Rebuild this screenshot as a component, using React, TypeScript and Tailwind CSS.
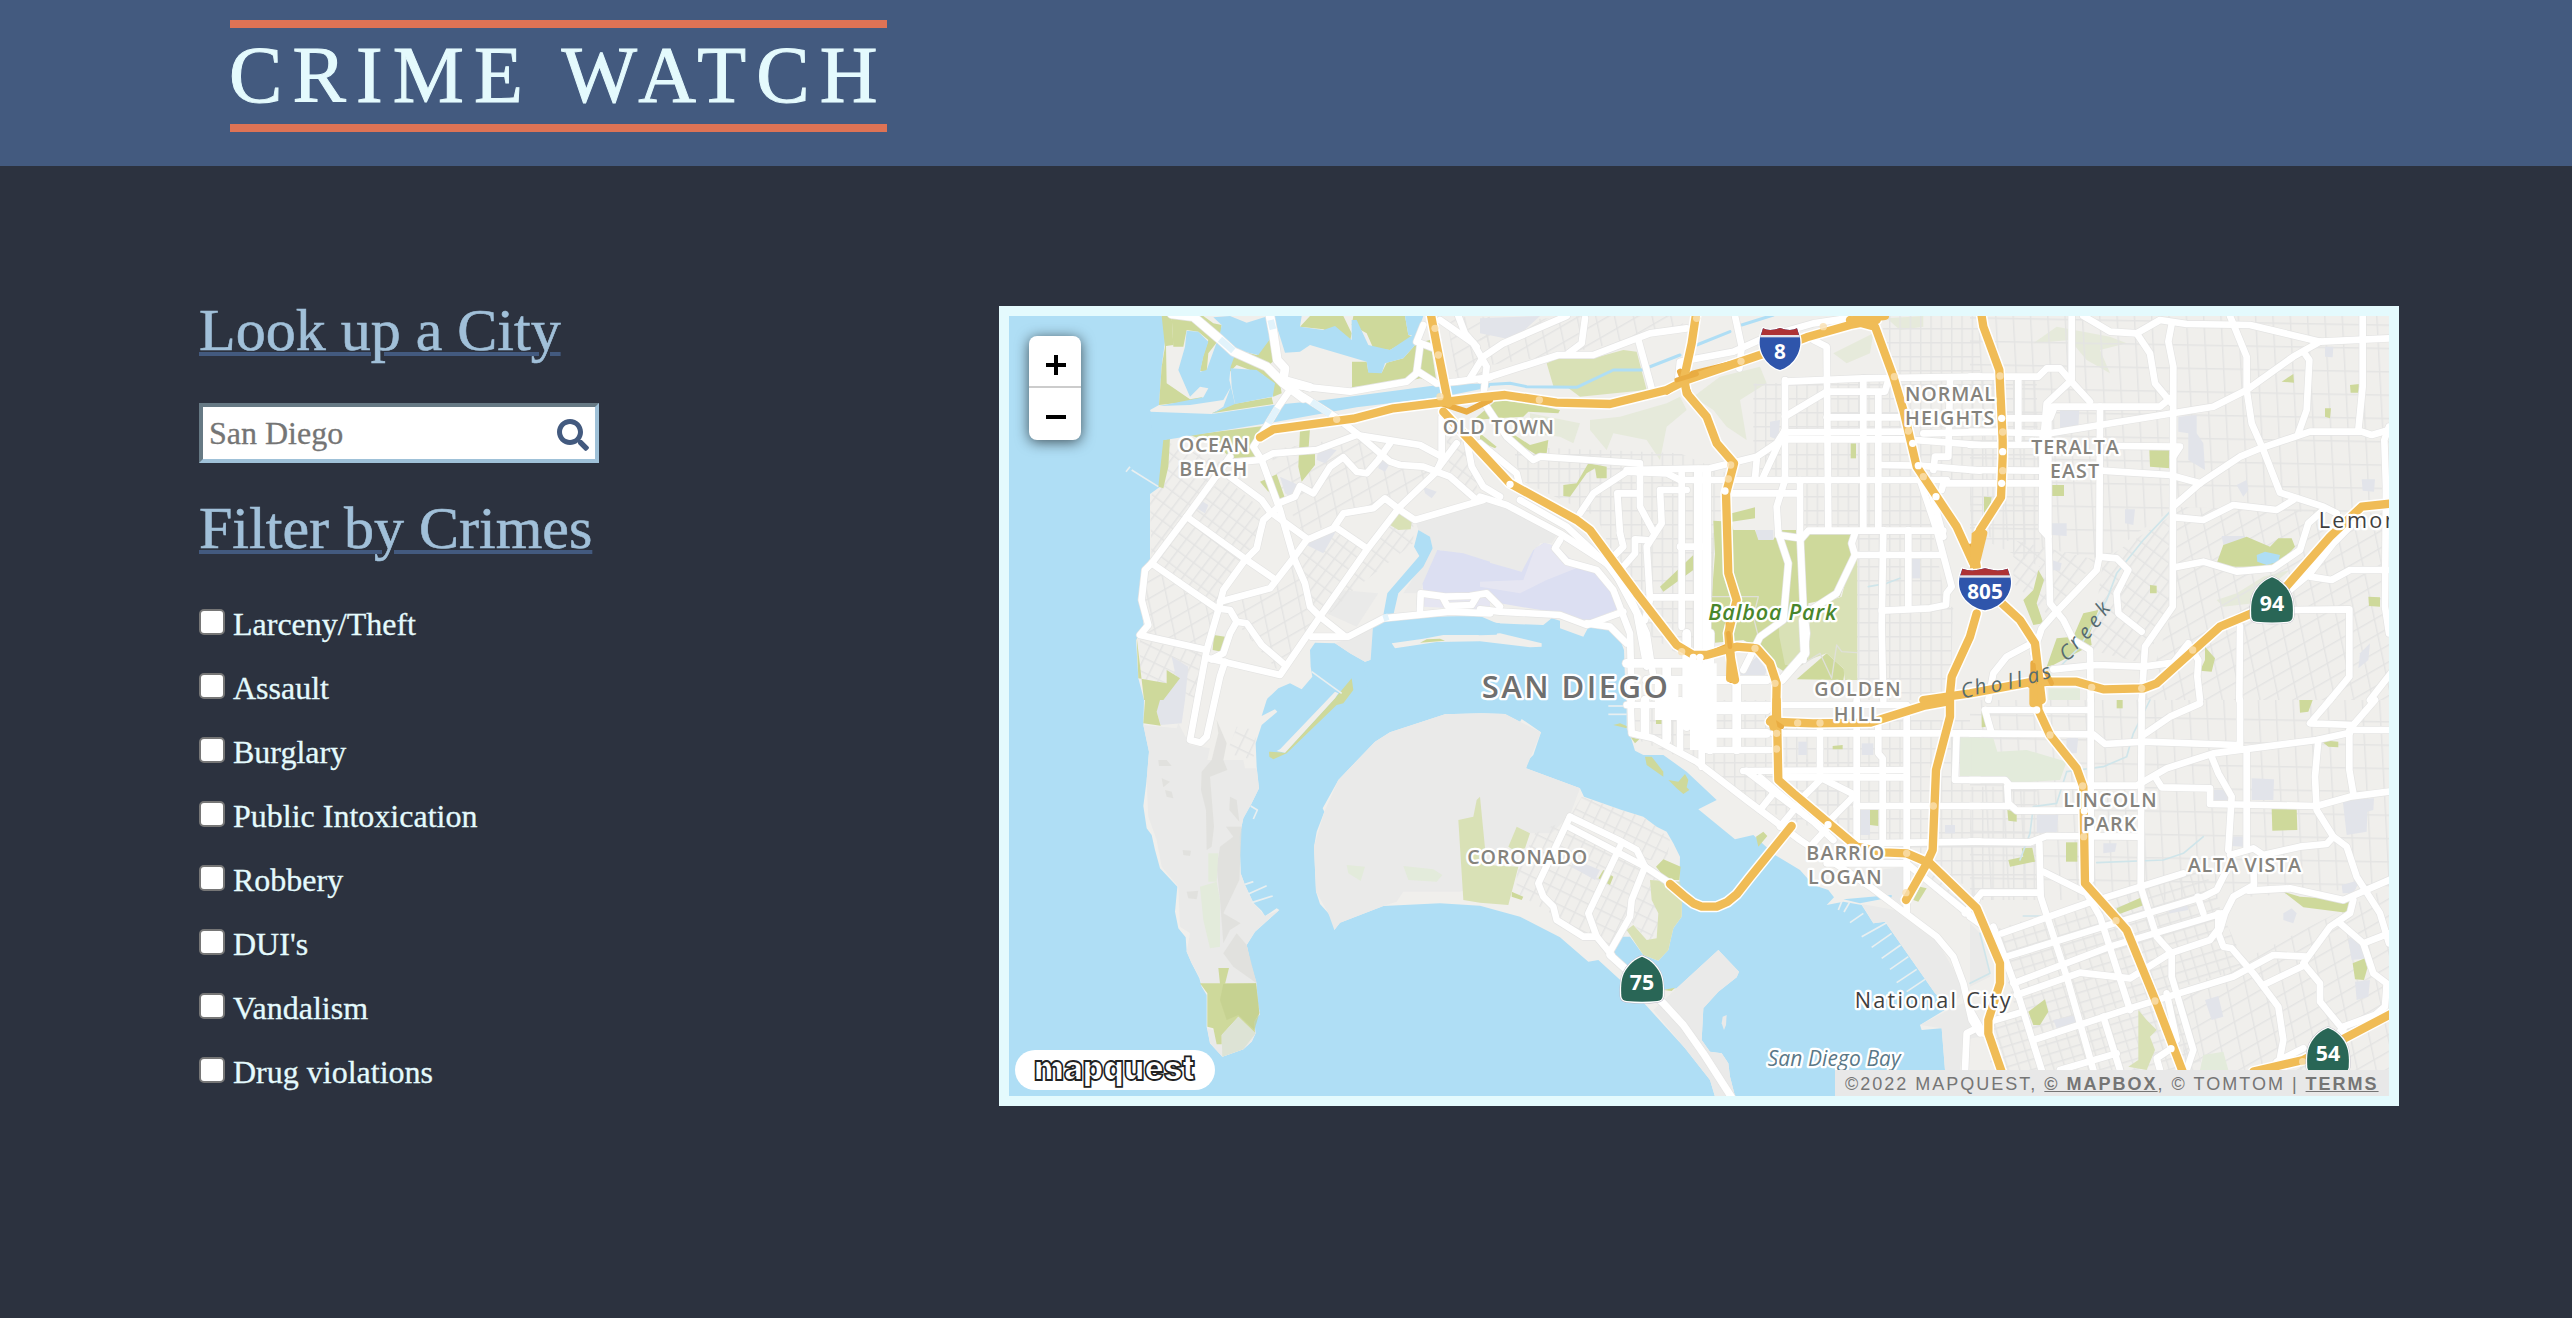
import React from "react";
import { FaSearch } from "react-icons/fa";

const crimes = [
  "Larceny/Theft",
  "Assault",
  "Burglary",
  "Public Intoxication",
  "Robbery",
  "DUI's",
  "Vandalism",
  "Drug violations",
];

// The map is drawn in six sectors; each has its own origin on the canvas.
type Sector = "A" | "B" | "C" | "D" | "E" | "F";
const origin: Record<Sector, [number, number]> = {
  A: [0, 0],
  B: [1470, 0],
  C: [2940, 0],
  D: [0, 1200],
  E: [1470, 1200],
  F: [2940, 1200],
};

// Shifts a list of "x,y" points from a sector to the canvas.
const at = (s: Sector, points: string) =>
  points
    .trim()
    .split(/\s+/)
    .map((p) => {
      const [x, y] = p.split(",").map(Number);
      return `${x + origin[s][0]},${y + origin[s][1]}`;
    })
    .join(" ");

const mainland = [
  at("A", "515,48 528,100 515,200 507,315 480,330 495,372 525,420 520,500 510,560 480,582 480,780 465,815 450,905 462,980 438,1020 445,1135"),
  at("D", "462,0 460,75 477,155 470,240 460,318 470,385 485,405 495,450 510,505 562,560 555,635 565,685 587,712 590,755 605,790 628,835 635,860 650,885 650,980 660,1030 697,1070 760,1048 785,1025 797,1000 793,965 810,942 803,905 800,855 782,790 770,735 795,695 868,630 860,625 825,648 815,632 790,608 765,555 752,520 748,410 760,355 785,310 807,265 800,200 797,130 815,75 862,35 855,28 815,48 830,0"),
  at("A", "833,1195 865,1165 900,1150 935,1168 967,1130 962,1100 960,1050 975,1028 1035,1030 1080,1060 1125,1085 1142,1080 1152,1010 1170,960 1300,950 1450,948"),
  at("B", "0,948 50,970 190,975 215,955 240,962 240,985 310,1010 325,982 385,985 415,1005 432,1050 437,1195"),
  at("E", "440,0 440,85 455,120 465,152 490,165 550,165 620,215 710,300 655,328 765,418 820,405 885,465 960,510 1000,555 1045,570 1062,592 1040,615 1090,605 1145,615 1180,670 1215,665 1365,880 1410,920 1320,975 1325,990 1385,985 1395,1110 1395,1200"),
  at("F", "1300,1200"),
  at("C", "1300,0"),
  at("A", "515,0"),
].join(" ");

const coronado = [
  at("D", "972,440 980,395 1003,335 998,325 1045,240 1155,125 1200,97 1365,43 1475,40"),
  at("E", "75,42 120,65 125,57 183,97 160,165 145,180 138,205 300,265 312,290 425,330 490,350 530,380 560,395 580,430 600,470 598,560 606,600 605,650 580,685 565,750 535,782 490,765 450,710 425,710 400,755 440,815 550,870 590,865 715,750 777,815 770,832 715,875 670,925 665,1020 690,1055 725,1060 745,1090 750,1130 768,1200 708,1200 690,1140 615,1045 470,885 355,780 325,785 240,712 120,650 0,617"),
  at("D", "1350,610 1180,618 1050,668 1033,690 1030,665 1015,640 990,612 978,575"),
].join(" ");

const water: string[] = [
  at("A", "590,92 625,95 655,125 640,170 630,215 650,210 690,100 695,75 670,52 720,48 770,68 835,48 845,110 805,165 740,150 722,200 718,240 735,312 665,342 700,320 722,262 700,300 600,315 507,318 640,292 655,265 630,260 600,290 565,210 585,140"),
  at("A", "850,48 935,48 930,80 1000,90 1035,78 1085,120 1085,60 1100,60 1135,135 1200,150 1260,110 1285,90 1280,130 1240,175 1185,190 1175,220 1135,218 1130,185 960,135 930,155 885,158 870,110"),
  at("A", "1245,48 1300,48 1280,105 1255,105"),
  at("A", "722,205 800,210 855,250 848,290 735,312 725,260"),
  at("A", "480,335 665,342 850,315 985,302 1345,255 1500,250 1500,262 1350,292 1100,322 860,365 525,420 490,420"),
  at("A", "1285,690 1320,710 1328,745 1300,800 1225,880 1210,945 1180,945 1192,880 1288,768 1272,740"),
  at("A", "1150,965 1450,948 1472,985 1465,1005 1360,1005 1205,1030 1215,1045 1340,1025 1470,1025 1470,1200 1140,1200 1120,1090 1142,1080"),
  at("C", "860,765 885,755 930,765 925,785 890,795 862,785"),
  at("E", "1090,598 1235,585 1235,592 1140,610"),
];

const waterways: string[] = [
  at("B", "0,255 90,250 140,260 290,262 400,210 485,210 600,165"),
  at("B", "650,135 750,95"),
  at("B", "785,75 880,45"),
];

const creeks: string[] = [
  at("C", "600,635 520,720 440,820 410,900 330,1040 260,1110"),
  at("F", "540,0 490,100 470,170 400,200 290,215 260,310 190,320 180,400 150,480"),
  at("F", "700,410 640,460 580,480 380,488"),
  at("F", "30,700 60,820 0,850"),
  at("F", "160,648 215,648"),
  at("B", "1165,860 1220,850 1260,835"),
];

const parks: string[] = [
  at("A", "515,48 545,48 550,135 528,138 530,250 600,298 635,292 640,300 507,315 515,200 525,140"),
  at("A", "545,48 640,48 670,70 695,75 690,115 655,160 650,215 630,212 640,165 655,120 625,95 590,90 580,140 550,140"),
  at("A", "740,150 800,165 845,110 855,180 830,200 870,250 875,280 850,290 820,225 740,195 715,220 718,190"),
  at("A", "930,80 960,48 1060,48 1085,100 1080,125 1000,88"),
  at("A", "1090,48 1245,48 1255,105 1270,110 1200,150 1150,145 1130,100 1085,75"),
  at("A", "1086,185 1130,185 1135,215 1175,218 1190,188 1240,175 1280,130 1320,120 1340,250 1290,235 1250,245 1086,262"),
  at("A", "665,340 730,312 845,292 850,312"),
  at("A", "520,420 540,415 535,500 520,565 505,560"),
  at("A", "600,405 820,378 795,430 800,470 720,475 690,440"),
  at("A", "930,390 960,385 955,455 975,460 975,495 935,545 925,500"),
  at("A", "810,545 860,523 885,595 870,600 850,560 835,575"),
  at("A", "672,1005 705,1010 695,1055 668,1050"),
  at("A", "440,1010 445,1135 530,1150 530,1110 570,1135 520,1200 462,1200"),
  at("D", "465,0 510,0 500,35 512,77 460,70"),
  at("D", "630,850 798,850 808,940 793,965 795,1000 745,950 695,1005 695,1033 680,1033 670,985 652,980 652,880"),
  at("D", "685,804 717,804 705,852 690,852"),
  at("D", "837,155 885,158 1035,-5 1085,-65 1090,-30 1060,10 1040,15 890,160 850,178 838,170"),
  at("B", "-20,360 50,300 145,310 240,330 235,340 145,335 130,350 50,355"),
  at("B", "0,400 50,440 45,445 0,425"),
  at("B", "50,370 150,435 205,420 200,460 170,465 130,440"),
  at("B", "325,490 380,500 380,535 350,535 345,505 320,520 270,590 250,588 250,555 290,550"),
  at("B", "540,860 640,765 640,810 550,875"),
  at("B", "755,640 825,622 825,655 755,665"),
  at("B", "700,662 755,665 760,690 825,690 835,720 880,720 895,690 965,690 985,700 1120,702 1132,770 1100,830 1080,890 985,910 985,1080 920,1120 890,1100 840,1050 790,1020 690,1030 695,890 705,760"),
  at("B", "950,1138 1040,1060 1095,1110 1090,1140"),
  at("B", "1112,430 1128,430 1128,475 1112,475"),
  at("C", "538,450 600,450 600,505 540,500"),
  at("C", "245,555 282,555 282,588 245,588"),
  at("C", "740,790 760,735 830,710 900,740 925,715 965,715 975,740 930,790 870,800 780,800"),
  at("C", "205,810 222,840 200,910 220,970 190,975 160,900 190,870"),
  at("C", "230,1100 260,1015 310,1010 340,940 385,930 360,1000 365,1035 250,1095"),
  at("C", "935,245 970,222 972,248"),
  at("C", "1140,255 1168,252 1168,278 1142,278"),
  at("C", "1065,325 1083,325 1080,355 1065,350"),
  at("C", "540,855 560,857 560,880 540,880"),
  at("C", "1195,890 1230,892 1230,920 1197,918"),
  at("C", "705,1040 735,1075 725,1115 690,1112 705,1080"),
  at("C", "42,590 65,592 62,615 42,640"),
  at("F", "905,325 980,328 982,390 907,392"),
  at("F", "115,480 160,470 155,445 187,443 195,485 120,500"),
  at("F", "288,427 322,427 322,485 288,485"),
  at("F", "112,330 140,335 140,365 115,362"),
  at("F", "440,625 515,592 522,615 440,645"),
  at("F", "175,935 225,898 235,935 210,975 190,975"),
  at("F", "940,575 990,590 1140,600 1130,638 1000,622"),
  at("F", "1148,790 1185,775 1192,805 1182,840 1155,838"),
  at("F", "1050,120 1105,125 1105,142 1075,140"),
  at("F", "988,0 1028,0 1015,35 990,38"),
  at("F", "440,0 458,0 458,25 440,25"),
  at("F", "35,30 50,50 50,80 35,82"),
  at("E", "495,170 515,170 550,215 550,230 500,195"),
  at("E", "565,240 595,245 615,222 625,240 620,262 628,270 610,282 590,265"),
  at("E", "828,410 850,395 862,408 835,440"),
  at("E", "528,500 550,478 602,500 598,540 560,540"),
  at("E", "355,535 370,510 400,530 390,555"),
  at("E", "1170,330 1195,330 1195,378 1170,375"),
  at("E", "1058,138 1088,135 1088,148 1058,148"),
  at("E", "95,575 130,590 125,600 95,590"),
  at("E", "1320,560 1340,565 1315,605 1300,600"),
  at("E", "440,85 400,75 420,70 440,78"),
  at("E", "452,112 478,118 465,130"),
  at("E", "528,60 545,60 545,72 528,72"),
  at("E", "550,870 585,863 575,873"),
];

const palePark: string[] = [
  at("B", "200,190 240,172 340,175 430,150 470,155 500,270 300,290 260,260 220,258"),
  at("B", "1085,890 1100,830 1132,770 1132,1140 1095,1140 1090,1105 1040,1060 985,1080 990,920"),
  at("B", "895,950 970,930 975,1060 955,1095 915,1095 898,1010"),
  at("E", "510,540 600,545 606,600 605,650 580,685 565,750 535,782 490,765 440,690 460,675 500,720 530,715 535,640 515,600"),
  at("E", "-65,360 -20,350 -10,300 0,290 20,495 115,500 85,615 0,608 -50,600"),
  at("E", "85,440 110,380 150,400 135,445 100,450"),
  at("A", "1200,675 1225,640 1265,665 1262,688 1225,690"),
  at("F", "505,930 530,960 560,990 540,1010 555,1050 530,1110 475,1100 505,1080"),
];

const mintPark: string[] = [
  at("F", "0,110 70,115 82,155 170,150 290,185 270,240 120,250 100,235 0,235"),
  at("E", "1440,112 1475,112 1475,232 1440,232"),
  at("C", "235,1165 330,1165 330,1200 235,1200"),
  at("F", "700,1065 760,1055 775,1110 690,1110"),
  at("D", "630,560 680,545 690,600 690,740 660,745 640,660"),
  at("D", "655,460 685,460 680,545 655,545"),
  at("D", "1070,495 1125,500 1112,543 1075,520"),
  at("D", "1240,498 1330,508 1357,525 1340,545 1255,540"),
];

const hills: string[] = [
  at("B", "330,360 420,350 490,330 560,310 600,290 620,330 560,380 540,480 500,420 400,400 380,450 330,390"),
  at("B", "150,340 300,370 280,430 240,410 150,400"),
  at("B", "640,290 720,230 840,200 860,250 780,300 800,420 740,380 700,330"),
  at("B", "1060,160 1180,100 1170,160 1100,190"),
  at("B", "1220,55 1330,48 1330,80 1260,90"),
  at("C", "190,130 260,80 420,110 470,130 390,150 420,220 350,180 300,120"),
  at("C", "740,900 800,880 880,830 960,810 900,860 850,910 760,920"),
];

const military: string[] = [
  at("D", "460,75 560,85 565,70 600,135 660,145 652,180 760,180 765,205 800,205 807,265 785,310 760,355 748,410 752,520 765,555 790,608 825,648 868,630 795,695 770,735 782,790 800,850 635,850 628,830 605,790 590,755 600,700 570,680 565,560 515,500 500,420 475,350 470,240 477,155"),
  at("D", "652,985 695,1000 745,950 797,1000 785,1025 760,1048 697,1070 660,1030"),
  at("A", "1275,660 1500,600 1500,790 1350,750 1300,850 1290,880 1240,880 1328,745 1320,710 1285,690"),
  at("B", "0,605 80,620 235,700 215,730 180,730 130,815 0,790"),
  at("A", "1050,870 1165,880 1100,980 1010,940"),
  at("A", "1035,1030 1075,1015 1170,965 1152,1010 1142,1080 1125,1085 1080,1060"),
  at("E", "1145,612 1300,640 1370,720 1450,860 1440,890 1405,920 1365,880 1215,665 1180,670"),
  at("E", "1195,510 1275,500 1275,620 1160,545"),
  at("E", "1320,975 1405,930 1470,900 1500,1010 1450,1020 1440,1110 1395,1110 1385,985"),
  at("F", "0,670 30,700 60,830 0,860"),
  at("E", "590,865 715,750 777,815 770,832 715,875 670,925 665,1020 690,1055 725,1060 745,1090 750,1130 768,1200 708,1200 690,1140 615,1045 520,930"),
];

const coronadoBase = [
  at("D", "972,440 1003,335 1045,240 1155,125 1200,97 1365,43 1475,40"),
  at("E", "75,42 183,97 138,205 300,265 270,345 215,400 150,400 110,380 85,440 -10,560 -60,575"),
  at("D", "1290,575 1240,575 1220,605 1180,618 1050,668 1033,690 1015,640 978,575"),
].join(" ");

const airport: string[] = [
  at("A", "1342,750 1420,760 1500,785 1500,930 1300,915 1298,850"),
  at("B", "0,780 125,815 160,750 190,730 235,740 260,785 350,815 400,880 420,925 320,965 240,940 60,910 0,870"),
];
const airportPale: string[] = [
  at("A", "1300,880 1365,885 1500,885 1500,930 1300,920"),
  at("B", "165,745 195,728 230,740 300,800 200,840 120,880 60,870 0,860 0,845 130,840"),
];

const blocks: string[] = [
  at("A", "950,735 975,705 1040,690 1000,760"),
  at("A", "985,440 1040,450 1005,490 980,480"),
  at("A", "870,530 925,555 900,590 885,580"),
  at("A", "630,600 655,615 645,640 620,625"),
  at("A", "1170,475 1200,490 1185,515 1165,505"),
  at("A", "1300,560 1340,575 1325,595 1305,580"),
  at("A", "545,1070 595,1100 585,1200 510,1200 560,1140"),
  at("D", "505,0 585,0 575,70 512,75 500,35"),
  at("B", "0,55 180,48 100,120 0,100"),
  at("B", "828,690 880,690 880,725 828,722"),
  at("B", "870,365 900,360 895,420 870,410"),
  at("B", "780,1120 830,1070 860,1110 850,1140 790,1140"),
  at("B", "1290,775 1320,775 1320,835 1290,835"),
  at("C", "270,325 328,325 325,385 270,385"),
  at("C", "625,350 680,345 680,400 700,430 705,510 655,480 655,400 625,395"),
  at("C", "465,628 495,628 490,675 465,670"),
  at("C", "755,708 825,708 825,725 760,735"),
  at("C", "1175,538 1215,538 1212,575 1178,572"),
  at("C", "1065,140 1090,140 1088,172 1065,170"),
  at("C", "800,555 830,540 835,570 820,590"),
  at("C", "245,780 275,790 270,812 245,810"),
  at("C", "245,670 290,670 290,708 245,705"),
  at("C", "1170,1060 1200,1030 1195,1080 1165,1105"),
  at("F", "845,235 912,238 910,300 845,300"),
  at("F", "1118,300 1212,295 1210,330 1192,335 1190,395 1130,405"),
  at("F", "200,345 265,345 260,400 200,398"),
  at("F", "290,115 325,110 320,160 288,160"),
  at("F", "705,900 745,888 760,950 725,960"),
  at("F", "1135,720 1160,700 1180,740 1190,775 1145,780"),
  at("F", "1155,845 1200,840 1195,890 1160,900"),
  at("F", "940,640 965,625 980,640 970,670 940,660"),
  at("F", "585,620 650,610 655,630 600,640"),
  at("F", "250,960 320,945 325,965 260,985"),
  at("F", "720,270 775,270 775,300 720,300"),
  at("F", "785,410 820,410 820,440 785,438"),
  at("F", "1115,555 1170,540 1150,580 1118,580"),
  at("F", "400,430 440,430 435,455 400,460"),
  at("E", "1145,130 1180,130 1180,165 1145,165"),
  at("E", "1140,330 1170,330 1170,405 1140,405"),
  at("E", "955,125 980,125 980,165 955,165"),
  at("E", "275,500 300,485 360,510 345,540"),
  at("E", "1395,375 1425,375 1425,400 1395,400"),
];

// Neighbourhood street grids: outline, pattern.
const grids: [string, string][] = [
  [at("A", "540,430 700,490 590,650 485,790 480,600"), "url(#gridSteep)"],
  [at("A", "700,530 830,640 800,745 690,900 680,925 490,785 590,650"), "url(#gridSteep)"],
  [at("A", "485,800 680,925 650,1045 460,1000 465,860"), "url(#gridBend)"],
  [at("A", "450,1020 650,1060 620,1200 530,1150 450,1140"), "url(#gridTilt)"],
  [at("A", "840,450 1090,410 1200,490 1330,520 1230,620 1060,640 950,715 880,600"), "url(#gridBend)"],
  [at("A", "1030,690 1130,750 990,950 960,920 910,770"), "url(#gridSteep)"],
  [at("A", "1230,640 1270,670 1270,730 1090,870 1010,950 1130,760"), "url(#gridSteep)"],
  [at("A", "700,910 840,870 905,780 980,950 870,1120 740,970"), "url(#gridBend)"],
  [at("A", "1360,330 1430,420 1470,600 1380,520"), "url(#gridSteep)"],
  [at("A", "1370,50 1500,50 1500,230 1400,240"), "url(#gridBend)"],
  [at("B", "0,70 300,48 620,48 600,90 260,160 0,200"), "url(#gridBend)"],
  [at("B", "100,440 600,460 740,520 650,1100 500,1000 350,650 120,540"), "url(#grid)"],
  [at("B", "820,250 1500,240 1500,540 820,540"), "url(#grid)"],
  [at("B", "960,545 1330,545 1400,920 1200,925 1200,1200 1130,1200 1130,700 960,690"), "url(#grid)"],
  [at("B", "1200,48 1500,48 1500,230 1240,230"), "url(#grid)"],
  [at("C", "0,48 1257,48 1257,620 1100,640 620,620 500,700 400,780 0,700"), "url(#gridWide)"],
  [at("C", "0,240 200,240 210,800 0,700"), "url(#grid)"],
  [at("C", "130,720 380,780 240,950 130,850"), "url(#gridSteep)"],
  [at("C", "400,780 600,650 610,920 520,1090 360,1050"), "url(#gridSteep)"],
  [at("C", "620,620 1257,640 1257,1200 520,1200 610,920"), "url(#gridBend)"],
  [at("B", "1210,930 1420,920 1410,1200 1210,1200"), "url(#grid)"],
  [at("E", "450,0 860,0 860,160 1130,200 1130,430 850,330 620,180 450,110"), "url(#grid)"],
  [at("E", "890,60 1470,60 1470,560 1130,430 900,220"), "url(#grid)"],
  [at("E", "1300,500 1370,500 1470,590 1470,640"), "url(#gridSteep)"],
  [at("F", "0,0 1257,0 1257,560 700,600 370,600 210,600 0,600"), "url(#gridWide)"],
  [at("F", "0,260 200,260 210,600 0,600"), "url(#grid)"],
  [at("F", "70,690 700,500 760,650 830,800 420,930 160,1010"), "url(#gridTiltL)"],
  [at("F", "60,960 450,930 640,900 700,1110 60,1110"), "url(#gridTiltL)"],
  [at("F", "640,870 1257,560 1257,1110 640,1110"), "url(#gridBend)"],
  [at("E", "305,290 500,350 570,420 560,480 500,480 270,350"), "url(#gridTilt)"],
  [at("E", "165,400 260,360 570,540 510,540 540,660 510,730 450,660 390,740 300,700 230,650 110,580 110,520"), "url(#gridTilt)"],
  [at("D", "740,80 800,90 790,180 710,160"), "url(#gridTilt)"],
];

const streets: [number, string[]][] = [
  [
    20,
    [
      at("A", "895,255 1080,275 1250,245 1285,215 1340,250 1400,245 1500,232"),
      at("A", "900,270 865,320 830,378 790,440 815,480 870,630 910,770 945,850 960,920 990,950 1060,1005"),
      at("A", "940,290 1035,350 1100,400 1200,485 1230,495 1300,500 1380,530 1460,600"),
      at("A", "720,488 810,480 850,460 980,450 1100,405 1290,435 1355,470"),
      at("A", "720,470 670,540 590,650 485,790 465,810 455,900 475,975 450,1005 650,1050"),
      at("A", "720,530 815,600 840,635 950,715"),
      at("A", "590,650 770,780 850,835"),
      at("A", "485,790 600,870 680,925 720,930 740,965 770,970 815,1035 885,1095"),
      at("A", "865,610 915,590 930,558 970,580 1020,500 1060,472 1100,515 1130,520 1165,480 1200,430"),
      at("A", "860,625 820,660 810,700 800,745 765,780 700,870 685,930 650,1050 600,1320 632,1328 650,1310 690,1130 705,1085"),
      at("A", "690,905 840,865 910,775 950,720 1030,685 1060,640 1150,625 1185,595 1230,630 1275,660 1480,600"),
      at("A", "1375,310 1355,350 1355,480 1340,515 1230,620 1130,750 990,950 870,1125 700,1085 655,1075"),
      at("A", "740,965 720,1000 700,1060 665,1078"),
      at("A", "1035,680 1130,745"),
      at("A", "965,1010 1075,1010 1180,955 1380,935 1500,940"),
      at("A", "1290,930 1292,880 1365,890 1440,888 1490,880 1530,920"),
      at("A", "1360,895 1372,918 1445,915 1460,890"),
      at("A", "1300,75 1280,125 1345,150"),
      at("A", "1290,140 1280,215"),
      at("A", "1350,60 1450,130 1490,200 1480,290"),
      at("A", "1405,48 1425,100 1460,140"),
      at("A", "1430,420 1445,500 1480,560 1530,590"),
      at("A", "1400,430 1340,510"),
      at("B", "-30,235 10,170 70,130 260,48"),
      at("B", "0,240 235,165 340,165 510,100 620,85"),
      at("B", "265,160 305,130 315,55"),
      at("B", "475,120 515,265"),
      at("B", "595,235 600,185 760,155 860,110 1000,70 1100,55"),
      at("B", "765,48 785,140 778,205"),
      at("B", "0,290 80,410 160,480 180,470 330,480 480,490 480,620 520,695"),
      at("B", "0,430 110,520 120,560"),
      at("B", "440,510 690,505 830,470 890,430 915,390"),
      at("B", "300,640 340,580 440,515 560,520 600,540 960,540 1400,540"),
      at("B", "420,700 412,580 470,580"),
      at("B", "420,700 430,740 390,780"),
      at("B", "620,570 540,570 545,670 500,740 510,900 495,960"),
      at("B", "430,800 465,760 465,718 500,720"),
      at("B", "750,580 955,580"),
      at("B", "605,520 605,980"),
      at("B", "600,740 680,740"),
      at("B", "520,892 650,892"),
      at("B", "915,240 915,540 890,620 895,700 925,790 910,960 840,1010 790,1110"),
      at("B", "915,245 1150,235 1500,230"),
      at("B", "1000,120 1040,140 1045,690"),
      at("B", "1150,235 1150,690"),
      at("B", "1195,280 1195,690"),
      at("B", "915,350 1040,275 1215,275 1225,240"),
      at("B", "1040,352 1280,352"),
      at("B", "920,397 1280,395"),
      at("B", "920,418 1280,418 1500,435"),
      at("B", "830,480 825,535"),
      at("B", "850,530 915,390"),
      at("B", "960,540 960,700 970,920 980,1000 970,1080"),
      at("B", "895,705 965,715 985,692 1390,692"),
      at("B", "1125,700 1115,730 1125,765 1385,765"),
      at("B", "1125,765 1070,880 1000,925"),
      at("B", "1210,690 1205,980 1210,1200"),
      at("B", "1285,690 1285,925"),
      at("B", "1205,932 1350,925 1398,915 1400,880 1415,860 1370,690 1320,540"),
      at("B", "1350,560 1390,710"),
      at("B", "1200,495 1320,497 1500,512"),
      at("B", "1360,510 1365,470 1405,470 1410,240"),
      at("B", "1385,570 1390,550 1560,550"),
      at("B", "1330,400 1560,395"),
      at("B", "0,928 60,935 240,945 320,975 430,935"),
      at("B", "240,720 225,745 260,785 350,810 400,870 450,1000 455,1200"),
      at("B", "0,590 80,615 240,700 380,790 440,870 500,1000 520,1130"),
      at("B", "120,600 260,680 400,810 470,940 500,1100"),
      at("B", "320,970 390,980 440,1030"),
      at("C", "0,230 205,230 230,205 270,205 300,240 360,305"),
      at("C", "305,48 305,240 230,310 220,420"),
      at("C", "235,320 235,700 240,910 280,960 310,1020 360,1050 362,1200"),
      at("C", "218,400 216,690 235,710"),
      at("C", "250,320 570,320 600,295"),
      at("C", "340,48 420,95 500,100 570,60 650,72 840,75 1050,125 1257,115"),
      at("C", "500,100 540,160 555,250 605,310"),
      at("C", "605,72 595,125 610,200 608,920 525,1040 515,1200"),
      at("C", "780,48 830,170 830,270 845,370 880,450 930,578 1060,620 1100,640"),
      at("C", "0,395 240,400 450,365 730,320 830,270 970,170 1050,125"),
      at("C", "1000,155 1018,180 1010,330 985,400"),
      at("C", "1178,48 1178,260 1165,390"),
      at("C", "615,615 690,550 810,470 870,445 1020,395 1175,395 1205,405 1257,390"),
      at("C", "395,512 600,525 690,550"),
      at("C", "0,435 200,435"),
      at("C", "440,438 630,440 610,470"),
      at("C", "390,320 388,770 440,775 475,810 440,880 445,940 515,995"),
      at("C", "90,355 240,355 250,330"),
      at("C", "145,235 145,420"),
      at("C", "0,510 215,512"),
      at("C", "90,550 215,550"),
      at("C", "388,770 380,810 250,945 215,985 190,1060"),
      at("C", "185,1030 110,1070 70,1120 55,1200"),
      at("C", "615,652 700,660 790,615 920,630 970,600"),
      at("C", "615,802 700,785 800,815 910,805 990,750 1015,670 1060,630"),
      at("C", "1020,830 1085,840 1140,810 1250,810"),
      at("C", "960,870 1020,820 1090,730 1170,650"),
      at("C", "970,930 1138,928 1138,1130 1080,1200"),
      at("C", "1257,380 1243,420 1248,560 1245,920 1257,1000"),
      at("C", "250,1108 380,1095 520,1100 610,1088 655,1030"),
      at("C", "810,980 808,1200"),
      at("C", "660,1040 685,1080 682,1130 690,1200"),
      at("C", "1270,1110 1200,1200"),
      at("E", "450,-40 455,100 520,115 650,185 800,300 960,420 1170,560 1370,710 1420,770 1450,850 1475,960 1500,1000"),
      at("E", "600,0 600,150"),
      at("E", "665,110 665,200"),
      at("E", "680,150 870,150"),
      at("E", "800,213 880,275 1000,365 1060,420"),
      at("E", "840,232 980,350"),
      at("E", "790,213 1280,210"),
      at("E", "900,232 1280,232"),
      at("E", "880,100 1500,100"),
      at("E", "440,15 1280,15"),
      at("E", "1020,80 1020,235"),
      at("E", "1130,0 1130,430"),
      at("E", "1195,60 1195,160 1208,175 1208,430"),
      at("E", "1280,40 1280,640"),
      at("E", "1130,318 1500,318"),
      at("E", "1130,430 1500,425"),
      at("E", "1040,370 1125,285 1025,235 970,290"),
      at("E", "840,330 880,280"),
      at("E", "900,380 950,320"),
      at("E", "1000,430 1050,375"),
      at("E", "1040,490 1280,490 1500,670"),
      at("E", "1430,100 1425,240 1500,240"),
      at("E", "1455,1110 1460,1000 1490,985"),
      at("E", "1455,640 1490,600"),
      at("E", "270,350 415,420 470,450 495,500 570,550"),
      at("E", "270,350 175,550 190,590 220,620 230,660 310,710 350,710 395,765"),
      at("E", "265,380 495,500 455,600 450,650 390,755"),
      at("E", "425,430 325,640 350,710"),
      at("F", "45,30 360,30"),
      at("F", "45,30 65,100"),
      at("F", "0,100 370,103 405,132 520,125 800,135"),
      at("F", "362,0 362,540"),
      at("F", "515,0 512,560 560,710 605,760 605,830 670,1050 650,1110"),
      at("F", "0,240 105,240 120,257 500,257 590,205 730,160 1040,120 1140,98 1140,90 1257,90"),
      at("F", "112,260 115,310 140,332 330,332"),
      at("F", "0,318 115,318"),
      at("F", "555,230 575,262 720,265 720,312 1040,318 1140,290 1257,275"),
      at("F", "0,425 180,427 230,408 510,410"),
      at("F", "208,430 212,590 290,830 370,1110"),
      at("F", "0,620 35,578 210,578"),
      at("F", "220,515 350,580 390,650 480,930"),
      at("F", "95,700 350,610 640,520"),
      at("F", "110,770 400,680 700,590 740,570 775,500"),
      at("F", "130,850 420,740 755,640"),
      at("F", "140,885 330,818 480,835 600,760 720,720 750,680"),
      at("F", "70,680 140,870 215,1110"),
      at("F", "400,950 450,1110"),
      at("F", "190,1020 480,925 790,830 910,765 1010,770"),
      at("F", "270,1110 440,1060"),
      at("F", "60,965 160,935"),
      at("F", "0,930 40,1000"),
      at("F", "0,650 70,700"),
      at("F", "570,1110 560,1075 605,1045"),
      at("F", "590,880 605,950 620,1020"),
      at("F", "520,105 600,50 690,10"),
      at("F", "810,0 810,140"),
      at("F", "830,150 830,450"),
      at("F", "725,170 745,220 785,290 775,450"),
      at("F", "745,640 745,700 760,740 785,745 850,820 925,920 940,1020 925,1100"),
      at("F", "780,465 850,445 880,465 990,440 1070,432 1090,410"),
      at("F", "1045,120 1035,230 1040,330 1090,410 1130,440 1160,530 1230,640 1257,730"),
      at("F", "850,500 852,555 790,590 765,640 750,690"),
      at("F", "835,572 960,565 1120,600 1257,540"),
      at("F", "1150,600 1140,640 1080,680 1000,790 1050,850 1050,905 1120,990"),
      at("F", "880,855 1005,795"),
      at("F", "1105,665 1180,730 1257,700"),
      at("F", "1180,730 1210,820 1250,850 1245,920 1215,945 1120,980 1100,1010"),
      at("F", "1138,90 1138,210 1150,280"),
      at("F", "1080,0 1020,70 1150,75 1215,0"),
      at("F", "683,590 700,640"),
      at("F", "920,1085 1000,1045"),
    ],
  ],
  [
    26,
    [
      at("A", "545,42 610,50 690,118 730,155 830,200 880,250 940,295"),
      at("A", "840,48 850,100 862,180 885,205 880,240 960,262"),
      at("B", "655,510 655,1200"),
      at("B", "680,510 680,1200"),
      at("B", "970,960 975,1060 905,1140"),
      at("E", "495,0 495,100"),
      at("E", "690,-200 690,150"),
      at("E", "770,-60 770,150"),
      at("E", "690,100 860,100"),
      at("E", "640,-60 860,-60"),
      at("E", "500,-60 640,-60"),
      at("E", "560,-100 560,120"),
      at("E", "440,-110 640,-110"),
      at("E", "600,30 860,30"),
      at("E", "620,-200 620,80"),
    ],
  ],
  [22, [at("E", "390,765 440,810 550,910 610,975 670,1060 760,1200")]],
];

const highways: string[] = [
  at("A", "810,412 850,388 1090,356 1210,325 1350,308 1470,292 1545,285 1700,308 1860,312 2030,270 2090,240 2310,165 2450,112 2580,75 2660,60"),
  at("A", "1320,30 1345,160 1375,310"),
  at("A", "1360,335 1420,400 1560,550 1760,660 1800,690 1940,880 2060,1035 2110,1065 2150,1065 2240,1040 2300,1045 2340,1090 2360,1150 2358,1260"),
  at("B", "650,30 635,130 612,235 620,280 680,350 710,430 762,490 738,580 745,820 770,900 745,1000 750,1060 765,1140"),
  at("B", "1110,60 1185,80 1240,230 1270,330 1310,500 1430,680 1480,790"),
  at("B", "1490,940 1470,1010 1415,1130 1408,1200"),
  at("C", "32,30 40,80 88,210 98,420 98,470 93,592 30,690 12,750 20,800"),
  at("C", "90,905 150,960 195,1030 215,1200"),
  at("C", "-140,1200 0,1180 190,1145 320,1145 400,1168 520,1165 560,1150 750,980 850,938"),
  at("C", "940,870 1080,710 1175,620 1270,610"),
  at("E", "870,65 1000,70 1170,68 1330,18 1400,5"),
  at("E", "890,0 895,240 940,280 1130,440 1210,457 1280,460 1350,490 1490,625 1560,790 1560,850 1525,960 1525,1000 1570,1130"),
  at("E", "1410,0 1410,50 1368,210 1358,450 1335,500 1278,600"),
  at("E", "570,552 612,588 640,610 665,620 710,620 742,606 770,583 810,532 935,378"),
  at("F", "200,-90 205,30 240,105 320,205 340,260 345,550 470,690 560,910 640,1120"),
  at("F", "850,1115 1000,1080 1270,938"),
];

const interchanges: string[] = [
  at("B", "560,275 640,220 760,190"),
  at("B", "600,215 630,290"),
  at("B", "670,1070 740,1040 820,1040"),
  at("B", "745,960 755,1140"),
  at("C", "190,1090 190,1200"),
  at("C", "180,1155 260,1145"),
  at("C", "20,780 0,740"),
  at("A", "1360,312 1430,335 1500,300"),
];

// Soft spots where a local road crosses a highway.
const crossings: [Sector, number, number][] = [
  ["A", 1040, 358], ["A", 1345, 165], ["A", 1335, 85], ["A", 1350, 290],
  ["B", 178, 300], ["B", 783, 184], ["B", 650, 55], ["B", 1243, 230], ["B", 1285, 393],
  ["B", 1330, 530], ["B", 752, 495], ["B", 745, 537], ["B", 605, 1055], ["B", 825, 1045],
  ["B", 885, 1150], ["B", 1030, 80], ["C", 90, 228], ["C", 98, 396], ["C", 98, 512],
  ["C", 365, 1162], ["C", 515, 1165], ["C", 668, 1050], ["E", 890, 100], ["E", 890, 147],
  ["E", 953, 69], ["E", 1020, 69], ["E", 1280, 460], ["E", 1360, 318], ["E", 1278, 578],
  ["F", 240, 105], ["F", 338, 258], ["F", 341, 410], ["F", 438, 662], ["F", 555, 903], ["F", 998, 1085],
];
const overpasses: [Sector, number, number][] = [
  ["B", 90, 553], ["B", 735, 573], ["B", 1298, 430], ["B", 1315, 497], ["B", 1368, 590],
  ["B", 640, 1072], ["B", 660, 1072], ["C", 95, 355], ["C", 98, 455], ["C", 95, 550],
  ["E", 1044, 374], ["F", 200, 30], ["F", 343, 333], ["F", 603, 1046],
];

type Label = [Sector, string, number, number, number, number, string, string];
// sector, text, left, baseline, width, font size, colour, extra classes
const labels: Label[] = [
  ["A", "OCEAN", 566, 457, 211, 59, "#85837d", "font-semibold"],
  ["A", "BEACH", 568, 528, 204, 59, "#85837d", "font-semibold"],
  ["A", "OLD TOWN", 1358, 402, 334, 59, "#85837d", "font-semibold"],
  ["B", "SAN DIEGO", 5, 1194, 559, 93, "#6f6f6f", "font-semibold"],
  ["B", "NORMAL", 1275, 304, 270, 59, "#85837d", "font-semibold"],
  ["B", "HEIGHTS", 1275, 375, 268, 59, "#85837d", "font-semibold"],
  ["B", "GOLDEN", 1003, 1189, 259, 59, "#85837d", "font-semibold"],
  ["E", "HILL", 1061, 62, 140, 59, "#85837d", "font-semibold"],
  ["C", "TERALTA", 184, 461, 262, 59, "#85837d", "font-semibold"],
  ["C", "EAST", 240, 533, 147, 59, "#85837d", "font-semibold"],
  ["B", "Balboa Park", 685, 961, 384, 65, "#49862c", "font-semibold italic"],
  ["D", "CORONADO", 1432, 491, 360, 59, "#85837d", "font-semibold"],
  ["E", "BARRIO", 979, 480, 234, 59, "#85837d", "font-semibold"],
  ["E", "LOGAN", 984, 552, 221, 59, "#85837d", "font-semibold"],
  ["F", "LINCOLN", 280, 321, 280, 59, "#85837d", "font-semibold"],
  ["F", "PARK", 338, 393, 161, 59, "#85837d", "font-semibold"],
  ["F", "ALTA VISTA", 653, 515, 340, 59, "#85837d", "font-semibold"],
  ["E", "National City", 1124, 924, 468, 65, "#3f3f3f", "font-medium"],
  ["C", "Lemon", 1046, 685, 238, 65, "#3f3f3f", "font-medium"],
  ["E", "San Diego Bay", 863, 1098, 399, 63, "#5a7888", "font-medium italic"],
];

const creekLetters: [string, number, number, number][] = [
  ["C", -22, 1196, -14], ["h", 18, 1184, -13], ["o", 66, 1178, -12], ["l", 118, 1168, -12],
  ["l", 145, 1162, -13], ["a", 178, 1152, -14], ["s", 221, 1139, -18],
  ["C", 288, 1087, -38], ["r", 320, 1050, -46], ["e", 350, 1022, -48], ["e", 379, 988, -50], ["k", 405, 950, -52],
];

const Grid = ({ id, w, h, angle, skew = 0 }: { id: string; w: number; h: number; angle: number; skew?: number }) => (
  <pattern id={id} width={w} height={h} patternUnits="userSpaceOnUse" patternTransform={`rotate(${angle}) skewX(${skew})`}>
    <path d={`M0,2 H${w} M2,0 V${h}`} stroke="#e4e4e3" strokeWidth="4.5" fill="none" />
  </pattern>
);

const Lines = ({ lines, color, width, cap = "round" }: { lines: string[]; color: string; width: number; cap?: "round" | "butt" }) => (
  <g fill="none" stroke={color} strokeWidth={width} strokeLinejoin="round" strokeLinecap={cap}>
    {lines.map((p, i) => (
      <polyline key={i} points={p} />
    ))}
  </g>
);

const Areas = ({ shapes, color }: { shapes: string[]; color: string }) => (
  <g fill={color}>
    {shapes.map((p, i) => (
      <polygon key={i} points={p} />
    ))}
  </g>
);

const Interstate = ({ x, y, label }: { x: number; y: number; label: string }) => {
  const w = label.length > 1 ? 80 : 63;
  const top = `M${-w + 12},1 Q${-w / 2},12 0,0 Q${w / 2},12 ${w - 12},1`;
  return (
    <g transform={`translate(${x} ${y})`}>
      <path
        d={`${top} L${w - 5},22 C${w + 8},66 ${w - 22},114 0,126 C${-w + 22},114 ${-w - 8},66 ${-w + 5},22 Z`}
        fill="#2f55ab"
        stroke="#fff"
        strokeWidth="8"
        strokeLinejoin="round"
        paintOrder="stroke"
      />
      <path d={`${top} L${w - 6},22 H${-w + 6} Z`} fill="#ae3335" />
      <rect x={-w + 4} y="21" width={w * 2 - 8} height="7" fill="#e5e4ea" />
      <text x="0" y="93" textAnchor="middle" fontSize="62" fill="#fff" className="font-bold">
        {label}
      </text>
    </g>
  );
};

const StateRoute = ({ x, y, label }: { x: number; y: number; label: string }) => (
  <g transform={`translate(${x} ${y})`}>
    <path
      d="M0,2 C18,8 42,26 54,52 C64,74 63,98 62,120 Q61,133 46,135 Q0,140 -46,135 Q-61,133 -62,120 C-63,98 -64,74 -54,52 C-42,26 -18,8 0,2 Z"
      fill="#fff"
      stroke="#b9b5c4"
      strokeWidth="10"
    />
    <path
      d="M0,2 C18,8 42,26 54,52 C64,74 63,98 62,120 Q61,133 46,135 Q0,140 -46,135 Q-61,133 -62,120 C-63,98 -64,74 -54,52 C-42,26 -18,8 0,2 Z"
      fill="#296656"
      stroke="#fff"
      strokeWidth="8"
      paintOrder="stroke"
    />
    <text x="0" y="102" textAnchor="middle" fontSize="64" fill="#fff" className="font-bold">
      {label}
    </text>
  </g>
);

function CityMap() {
  return (
    <svg viewBox="57 48 4140 2340" className="block h-[780px] w-[1380px]" role="img" aria-label="Map of San Diego">
      <defs>
        <Grid id="grid" w={31} h={42} angle={0} />
        <Grid id="gridWide" w={52} h={70} angle={1} skew={4} />
        <Grid id="gridSteep" w={44} h={30} angle={-53} />
        <Grid id="gridTilt" w={34} h={40} angle={26} />
        <Grid id="gridTiltL" w={33} h={30} angle={-17} />
        <Grid id="gridBend" w={58} h={44} angle={-30} skew={-18} />
        <clipPath id="landClip">
          <polygon points={mainland} />
          <polygon points={coronado} />
        </clipPath>
      </defs>

      <rect x="57" y="48" width="4140" height="2340" fill="#afdef5" />
      <polygon points={mainland} fill="#f0efec" />
      <polygon points={coronado} fill="#f0efec" />
      <polygon points={coronadoBase} fill="#eaeae9" />
      <Areas shapes={military} color="#eaeae9" />
      <Areas shapes={airport} color="#dcdff2" />
      <Areas shapes={airportPale} color="#e6e6f2" />

      <g fill="#e0e0dc" opacity="0.8">
        <polygon points={at("D", "680,60 710,130 700,180 712,210 660,230 672,380 665,440 650,450 648,330 633,270 635,215 665,180 685,100")} />
        <polygon points={at("D", "708,380 755,380 748,540 700,640 752,670 720,690 700,730 690,600 680,500 690,440 730,410")} />
        <polygon points={at("D", "720,290 740,300 748,365 718,330")} />
        <polygon points={at("D", "770,735 800,850 730,800 700,760 740,700")} />
        <polygon points={at("D", "505,180 530,180 545,198 507,198")} />
        <polygon points={at("D", "515,235 540,245 520,262")} />
        <polygon points={at("D", "525,270 545,275 550,295 530,290")} />
        <polygon points={at("D", "590,575 625,572 620,598 595,595")} />
        <polygon points={at("D", "578,450 603,452 600,468 580,465")} />
      </g>
      <Areas shapes={hills} color="#e6eadb" />

      <g clipPath="url(#landClip)">
        {grids.map(([p, fill], i) => (
          <polygon key={i} points={p} fill={fill} />
        ))}
      </g>
      <Areas shapes={blocks} color="#e2e4ea" />
      <Areas shapes={mintPark} color="#e3ebdb" />
      <Areas shapes={parks} color="#ced99b" />
      <Areas shapes={palePark} color="#d9e1b6" />
      <Areas shapes={water} color="#afdef5" />

      {/* Harbor Island */}
      <polygon points={at("A", "1205,1030 1300,1016 1360,1005 1465,1005 1530,1000 1655,1030 1655,1040 1620,1042 1470,1024 1340,1026 1215,1045")} fill="#f0efec" />
      <polygon points={at("A", "1290,1028 1310,1018 1350,1016 1365,1022")} fill="#ced99b" />
      <polygon points={at("A", "1466,962 1530,970 1520,1004 1466,1006 1472,985")} fill="#afdef5" />

      <polygon points={at("D", "745,950 797,1000 760,1048 697,1070 695,1005")} fill="#dde3d5" />
      <polygon points={at("D", "700,852 798,850 808,940 793,990 745,945 710,960 690,900")} fill="#c3cf8d" opacity="0.7" />
      <Lines lines={waterways} color="#afdef5" width={9} />
      <Lines lines={creeks} color="#cfe5ea" width={5} />

      {/* Piers and breakwaters */}
      <Lines
        lines={[
          at("A", "408,515 420,500"),
          at("A", "425,510 505,560"),
          at("A", "965,1115 1055,1180"),
          at("D", "775,582 830,557"),
          at("D", "785,608 848,588"),
          at("D", "765,553 790,545"),
          at("D", "782,318 802,330 790,357"),
          at("E", "385,18 440,18"),
          at("E", "385,43 440,43"),
          at("E", "1110,668 1150,640"),
          at("E", "1145,710 1220,668"),
          at("E", "1175,742 1235,700"),
          at("E", "1205,775 1262,735"),
          at("E", "1230,808 1285,770"),
          at("E", "1250,848 1310,808"),
          at("E", "1280,875 1335,838"),
          at("E", "1075,630 1085,605"),
          at("E", "1092,636 1110,605"),
        ]}
        color="#e9eff0"
        width={5}
        cap="butt"
      />
      <polygon points={at("D", "860,153 885,158 1035,-5 1045,-20 1035,-25 870,148")} fill="#f0efec" />
      <polygon points={at("E", "728,950 740,945 738,975 732,990 725,970")} fill="#eaeae9" />
      <Lines
        lines={[
          at("B", "700,700 695,890 835,890 820,950 835,1010"),
          at("B", "955,1100 1020,1060 1055,1135 1070,1035 1085,1055 1130,1058"),
        ]}
        color="#dfe0d8"
        width={4}
      />

      {streets.map(([w, lines]) => (
        <Lines key={w} lines={lines} color="#e4e4e3" width={w + 4} />
      ))}
      {streets.map(([w, lines]) => (
        <Lines key={w} lines={lines} color="#ffffff" width={w} />
      ))}

      {/* Downtown blocks */}
      <rect x="2100" y="1090" width="80" height="260" fill="#fff" />
      <rect x="1995" y="1150" width="70" height="110" fill="#fff" />

      <Lines lines={highways} color="#ffffff" width={34} />
      <Lines lines={interchanges} color="#e9ac42" width={18} />
      <Lines lines={highways} color="#f0bc56" width={25} />
      <g stroke="#e9ac42" strokeWidth="14" fill="none" strokeLinecap="round">
        <polyline points={at("B", "590,240 650,222")} />
        <polyline points={at("B", "745,1000 750,1040")} />
        <polyline points={at("C", "190,1095 195,1150")} />
        <polyline points={at("C", "230,1120 245,1150")} />
        <polyline points={at("E", "870,58 905,80")} />
      </g>
      <g stroke="#f0bc56" strokeWidth="24" fill="none" strokeLinecap="round">
        <polyline points={at("B", "1120,60 1215,48")} />
        <polyline points={at("B", "752,1060 750,1135")} />
        <polyline points={at("B", "1490,780 1510,700")} />
        <polyline points={at("E", "875,58 880,80")} />
        <polyline points={at("E", "1660,-40 1660,10")} />
      </g>
      <polygon points={at("B", "1475,700 1500,680 1500,805 1470,805")} fill="#f0bc56" />
      {crossings.map(([s, x, y], i) => (
        <circle key={i} cx={origin[s][0] + x} cy={origin[s][1] + y} r="11" fill="#fae0b0" opacity="0.8" />
      ))}
      {overpasses.map(([s, x, y], i) => (
        <circle key={i} cx={origin[s][0] + x} cy={origin[s][1] + y} r="11" fill="#fff" />
      ))}
      {/* Bridges over the channel */}
      <Lines
        lines={[
          at("A", "690,118 730,152"),
          at("A", "842,60 849,88"),
          at("A", "862,325 835,370"),
          at("A", "965,305 1020,343"),
          at("A", "1180,955 1195,950"),
        ]}
        color="#e2f3fb"
        width={20}
        cap="butt"
      />

      <g className="[font-family:'Open_Sans','Noto_Sans',sans-serif]">
        <Interstate x={2370} y={84} label="8" />
        <Interstate x={2985} y={805} label="805" />
        <StateRoute x={3846} y={830} label="94" />
        <StateRoute x={1956} y={1968} label="75" />
        <StateRoute x={4014} y={2182} label="54" />
        {labels.map(([s, text, x, y, width, size, color, cls]) => (
          <text
            key={text}
            x={origin[s][0] + x}
            y={origin[s][1] + y}
            textLength={width}
            fontSize={size}
            fill={color}
            stroke="#ffffff"
            strokeWidth="14"
            strokeLinejoin="round"
            paintOrder="stroke"
            className={cls}
          >
            {text}
          </text>
        ))}
        {creekLetters.map(([c, x, y, r], i) => (
          <text key={i} transform={`translate(${x + 2940} ${y}) rotate(${r})`} fontSize="62" fill="#566b70" className="italic">
            {c}
          </text>
        ))}
      </g>
    </svg>
  );
}

function MapPanel() {
  return (
    <section className="relative h-[800px] w-[1400px] shrink-0 overflow-hidden border-[10px] border-[#e4fafd]">
      <CityMap />
      <div className="absolute left-5 top-5 flex h-[104px] w-[52px] flex-col overflow-visible rounded-lg bg-white shadow-[0_2px_14px_rgba(0,0,0,0.65)]">
        <button aria-label="Zoom in" className="flex h-[52px] items-center justify-center border-b-2 border-[#ccc] pl-0.5 pt-2">
          <svg viewBox="0 0 20 20" className="h-5 w-5">
            <path d="M0 10H20M10 0V20" stroke="#000" strokeWidth="4" />
          </svg>
        </button>
        <button aria-label="Zoom out" className="flex h-[52px] items-center justify-center pl-0.5 pt-1.5">
          <svg viewBox="0 0 20 20" className="h-5 w-5">
            <path d="M0 10H20" stroke="#000" strokeWidth="4" />
          </svg>
        </button>
      </div>
      <div className="absolute bottom-[6px] left-[6px] flex h-10 w-[200px] items-center rounded-full bg-white pl-[17px]">
        <svg viewBox="0 0 166 36" className="h-9 w-[166px] overflow-visible">
          <text
            x="2"
            y="28"
            textLength="161"
            lengthAdjust="spacingAndGlyphs"
            fontSize="35"
            fill="#fff"
            stroke="#222"
            strokeWidth="1.8"
            strokeLinejoin="miter"
            className="[font-family:Inter,sans-serif] font-black"
          >
            mapquest
          </text>
        </svg>
      </div>
      <div className="absolute bottom-0 right-0 flex h-[26px] w-[554px] items-center whitespace-pre bg-[#e8e8e8] pl-[10px] pt-px text-[18px] leading-[26px] tracking-[2px] text-[#757575] [font-family:'Liberation_Sans',Arial,sans-serif]">
        ©2022 MAPQUEST, <a className="font-bold underline">© MAPBOX</a>, © TOMTOM | <a className="font-bold underline">TERMS</a>
      </div>
    </section>
  );
}

export default function App() {
  return (
    <div className="min-h-[1318px] w-full overflow-hidden bg-[#2c323f] [font-family:'Liberation_Serif','Times_New_Roman',serif]">
      <header className="h-[166px] bg-[#435a7f] pl-[230px] pt-5">
        <h1 className="h-28 w-[657px] whitespace-nowrap border-y-8 border-[#de7355] text-[80px] leading-[95px] tracking-[10.1px] text-[#e4fafd] [-webkit-text-stroke:1px_#e4fafd] [text-indent:-1px]">
          CRIME WATCH
        </h1>
      </header>
      <main className="flex justify-between pl-[199px] pr-[173px]">
        <section className="flex w-[400px] flex-col pt-[130px]">
          <h2 className="whitespace-nowrap text-[60px] leading-[68px] text-[#a1c0d9] underline decoration-[#435a7f] decoration-[4px] underline-offset-[2px] [-webkit-text-stroke:0.6px_#a1c0d9]">
            Look up a City
          </h2>
          <div className="mt-[39px] flex h-[60px] items-center justify-between border-4 border-b-[#9fc1d8] border-l-[#667984] border-r-[#9fc1d8] border-t-[#667984] bg-white pl-[6px] pr-[6px]">
            <input
              placeholder="San Diego"
              className="h-full w-[320px] bg-transparent text-[32px] leading-[52px] outline-none placeholder:text-[#757575] [-webkit-text-stroke:0.3px_#757575]"
            />
            <FaSearch className="mt-1 h-8 w-8 text-[#435a7f]" />
          </div>
          <h2 className="mt-[31px] whitespace-nowrap text-[60px] leading-[68px] text-[#a1c0d9] underline decoration-[#435a7f] decoration-[4px] underline-offset-[2px] [-webkit-text-stroke:0.6px_#a1c0d9]">
            Filter by Crimes
          </h2>
          <ul className="mt-[30px]">
            {crimes.map((crime) => (
              <li key={crime}>
                <label className="flex h-16 gap-2 text-[32px] leading-[64px] text-[#e4fafd] [-webkit-text-stroke:0.3px_#e4fafd]">
                  <input
                    type="checkbox"
                    className="mt-[17px] h-[26px] w-[26px] shrink-0 appearance-none rounded-[5px] border-2 border-[#767676] bg-white"
                  />
                  {crime}
                </label>
              </li>
            ))}
          </ul>
        </section>
        <div className="pt-[140px]">
          <MapPanel />
        </div>
      </main>
    </div>
  );
}
